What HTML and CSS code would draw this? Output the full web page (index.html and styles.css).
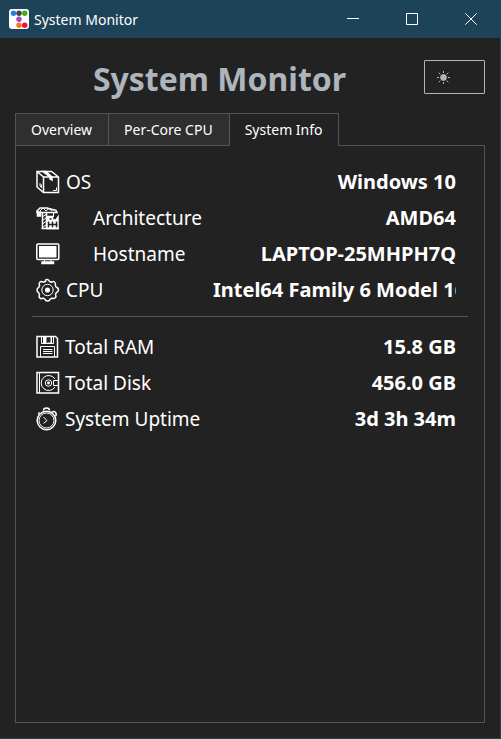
FILE: index.html
```html
<!DOCTYPE html>
<html lang="en">
<head>
<meta charset="utf-8">
<meta name="viewport" content="width=device-width, initial-scale=1">
<title>System Monitor</title>
<link rel="stylesheet" href="styles.css">
</head>
<body>
<div class="window">
  <header class="titlebar">
    <svg class="app-icon" viewBox="0 0 20 20" aria-hidden="true">
      <rect width="20" height="20" rx="3" fill="#fff"/>
      <circle cx="4.5" cy="4.3" r="2.7" fill="#2f7de1"/>
      <circle cx="10" cy="4.3" r="2.7" fill="#454545"/>
      <circle cx="15.7" cy="4.3" r="2.7" fill="#3fae16"/>
      <circle cx="10" cy="10.3" r="2.7" fill="#9b51b8"/>
      <circle cx="10" cy="16.3" r="2.7" fill="#ff7417"/>
      <circle cx="15.7" cy="16.3" r="2.7" fill="#fb0a3c"/>
    </svg>
    <span class="window-name">System Monitor</span>
    <div class="window-controls">
      <button type="button" aria-label="Minimize"><svg viewBox="0 0 12 12"><path d="M0 5.5h12"/></svg></button>
      <button type="button" aria-label="Maximize"><svg viewBox="0 0 12 12"><path d="M.5.5h11v11H.5z"/></svg></button>
      <button type="button" aria-label="Close"><svg viewBox="0 0 12 12"><path d="M.3.3l11.4 11.4M11.7.3L.3 11.7"/></svg></button>
    </div>
  </header>

  <main class="content">
    <div class="heading">
      <h1>System Monitor</h1>
      <button type="button" class="theme-button" aria-label="Toggle theme">
        <svg viewBox="0 0 13 13"><circle cx="6.5" cy="6.5" r="2.9" fill="#adb5bd"/><path d="M6.500 0v2M6.500 11v2.500M0 6.500h2M11 6.500h2M1.700 1.700l1.700 1.700M11.300 1.700l-1.700 1.700M1.700 11.300l1.700-1.700M11.300 11.300l-1.700-1.700"/></svg>
      </button>
    </div>

    <div class="tabs" role="tablist">
      <button type="button" class="tab" role="tab" aria-selected="false">Overview</button>
      <button type="button" class="tab" role="tab" aria-selected="false">Per-Core CPU</button>
      <button type="button" class="tab" role="tab" aria-selected="true" id="tab-info">System Info</button>
    </div>

    <section class="panel" role="tabpanel" aria-labelledby="tab-info">
      <dl class="facts">
        <div class="fact">
          <dt>
            <svg class="icon" viewBox="0 0 24 24"><path d="M1 1.500h14.500l7 5.500v15.500H7.500L1 17zM1 1.500l6.500 5.500v15.500M7.500 7h15"/><path class="solid" d="M7 1.500h3l6 5.500v3l-2-1V7z"/><path class="fine" d="M4 13.500l1.500 1.500v2.500L4 16zM17 20.500h3.500v-3"/></svg>
            <span>OS</span>
          </dt>
          <dd>Windows 10</dd>
        </div>
        <div class="fact">
          <dt class="spaced">
            <svg class="icon" viewBox="0 0 24 24"><path d="M1 5L4 2h7l9 2.500 1 2H1zM6.500 7v15.500M10.500 7v15.500"/><path class="fine" d="M6.500 11l4-3M6.500 14.500l4-3M6.500 18l4-3M6.500 21.500l4-3M4 5l3-3 3 3 3-2.500 3 2.500M17.500 7v4"/><path class="solid" d="M1.500 6h3v4h-3zM11 10.500h5.500v3.500H20l2-3v11.500H11z"/><path class="cut" d="M12.500 15.500v6M12.500 18.500h9M16.500 15.500v6M20.500 15.500v6M13.500 13h2"/><path d="M5.500 22.500H23"/></svg>
            <span>Architecture</span>
          </dt>
          <dd>AMD64</dd>
        </div>
        <div class="fact">
          <dt class="spaced">
            <svg class="icon" viewBox="0 0 24 24"><rect x=".8" y="2" width="22" height="15.5" rx="1"/><path d="M3 4h17.500v11.500H3z" fill="#fff" stroke="none"/><path class="fine" d="M8.500 17.500v2.500M15 17.500v2.500"/><path d="M6 20h11.500v1.500H6z"/></svg>
            <span>Hostname</span>
          </dt>
          <dd>LAPTOP-25MHPH7Q</dd>
        </div>
        <div class="fact">
          <dt>
            <svg class="icon" viewBox="0 0 24 24"><path d="M9.500 3.500Q9 1.500 11 1.500q2 0 2.500 2l2 .8Q17 3 18.500 4t.8 3.300l1 2q2.200.5 2.200 2.500t-2.200 2.800l-.8 2q1 2-.3 3.200t-3.200.4l-2 1q-.5 1.800-2.500 1.800t-2.500-1.800l-2-1q-2 1-3.200-.3t-.3-3.200l-.8-2Q1 14 1 12t1.800-2.600l.8-2Q2.500 5.500 3.800 4.200t3.500 0z"/><circle cx="11.500" cy="12" r="5.700" class="fine"/><circle cx="11.500" cy="12" r="1.8" class="solid"/></svg>
            <span>CPU</span>
          </dt>
          <dd>Intel64 Family 6 Model 165</dd>
        </div>
      </dl>
      <hr>
      <dl class="facts memory">
        <div class="fact">
          <dt>
            <svg class="icon" viewBox="0 0 24 24"><path d="M1 1.500h18.500l2 2v18.500H1z"/><path class="fine" d="M4.500 22V11.500h14V22M7 14.500h9.500M7 16.500h9.500M7 18.500h9.500M5.500 2v6.500h12V2"/><path d="M7 2h3.500v6H7zM14.500 2h1.500v6h-1.500z" fill="#fff" stroke="none"/><path class="fine" d="M11.500 8h4"/></svg>
            <span>Total RAM</span>
          </dt>
          <dd>15.8 GB</dd>
        </div>
        <div class="fact">
          <dt>
            <svg class="icon" viewBox="0 0 24 24"><path d="M1 1.500h21.500v20.500H1z"/><path class="fine" d="M3.500 2v20M22.500 9.500h-5v5h5M19 8a7.500 7.500 0 1 0 0 8"/><circle class="fine" cx="12.500" cy="12" r="3.200"/><circle cx="12.500" cy="12" r=".7" class="solid"/></svg>
            <span>Total Disk</span>
          </dt>
          <dd>456.0 GB</dd>
        </div>
        <div class="fact">
          <dt>
            <svg class="icon" viewBox="0 0 24 24"><circle cx="10.500" cy="13.500" r="9.300"/><circle cx="10.500" cy="13.500" r="7.500" class="fine"/><path d="M7.500 3.500q0-2.500 3-2.500t3 2.500M8 4v1M13 4v1M15.500 5.500q2.500-2 4 0t0 3.500"/><path class="fine" d="M2.500 7.500q-1-2 1.500-2M7.500 10l3.500 3.500L7.500 16.500"/></svg>
            <span>System Uptime</span>
          </dt>
          <dd>3d 3h 34m</dd>
        </div>
      </dl>
    </section>
  </main>
</div>
</body>
</html>
```

FILE: styles.css
```css
* {
  box-sizing: border-box;
}

body {
  margin: 0;
  background: #222;
  color: #fff;
  font-family: "Noto Sans", "Open Sans", sans-serif;
}

button {
  margin: 0;
  border: 0;
  border-radius: 0;
  background: none;
  color: inherit;
  font: inherit;
}

svg {
  display: block;
  fill: none;
  stroke: currentColor;
}

.window {
  display: flex;
  flex-direction: column;
  min-height: 100vh;
  border: solid #1d4358;
  border-width: 0 1px 1px 0;
}

.titlebar {
  display: flex;
  align-items: center;
  height: 38px;
  padding-left: 9px;
  background: #1d4358;
}

.app-icon {
  width: 20px;
  height: 20px;
  margin-right: 5px;
  stroke: none;
}

.window-name {
  flex: 1;
  font-size: 14px;
}

.window-controls {
  display: flex;
  height: 100%;
}

.window-controls button {
  display: grid;
  place-items: center;
  width: 59px;
  padding: 0;
}

.window-controls svg {
  width: 12px;
  height: 12px;
}

.content {
  display: flex;
  flex: 1;
  flex-direction: column;
  padding: 15px;
}

.heading {
  display: flex;
  align-items: center;
  height: 48px;
  margin-bottom: 12px;
}

h1 {
  flex: 1;
  margin: 0;
  padding-top: 4px;
  color: #adb5bd;
  font-size: 32px;
  line-height: 1;
  text-align: center;
}

.theme-button {
  width: 61px;
  height: 34px;
  padding: 0 12px;
  border: 1px solid #adb5bd;
  border-radius: 1px;
  color: #adb5bd;
}

.theme-button svg {
  width: 13px;
  height: 13px;
}

.tabs {
  display: flex;
  z-index: 1;
}

.tab {
  height: 33px;
  padding: 0 15px;
  border: 1px solid #555;
  background: #2f2f2f;
  font-size: 14px;
}

.tab:not(:last-child) {
  padding-right: 16px;
}

.tab + .tab {
  border-left: 0;
}

.tab[aria-selected="true"] {
  border-bottom-color: #222;
  background: #222;
}

.panel {
  flex: 1;
  margin-top: -1px;
  padding: 18px 16px;
  border: 1px solid #555;
}

.facts {
  margin: 0;
  padding: 0 12px 0 4px;
}

.fact {
  display: grid;
  grid-template-columns: minmax(0, 177px) minmax(0, 1fr);
  align-items: center;
  height: 36px;
  font-size: 19px;
  line-height: 36px;
}

dt {
  display: flex;
  align-items: center;
  gap: 6px;
  white-space: nowrap;
}

dt.spaced {
  gap: 33px;
}

.memory dt {
  gap: 5px;
}

dd {
  margin: 0;
  overflow: hidden;
  font-size: 20px;
  font-weight: bold;
  text-align: right;
  white-space: nowrap;
}

hr {
  height: 1px;
  margin: 8px 0 12px;
  border: 0;
  background: #555;
}

.icon {
  flex: none;
  width: 24px;
  height: 24px;
  stroke-width: 1.5;
}

.fine {
  stroke-width: 1;
}

.solid {
  fill: #fff;
}

.cut {
  stroke: #222;
}
```
